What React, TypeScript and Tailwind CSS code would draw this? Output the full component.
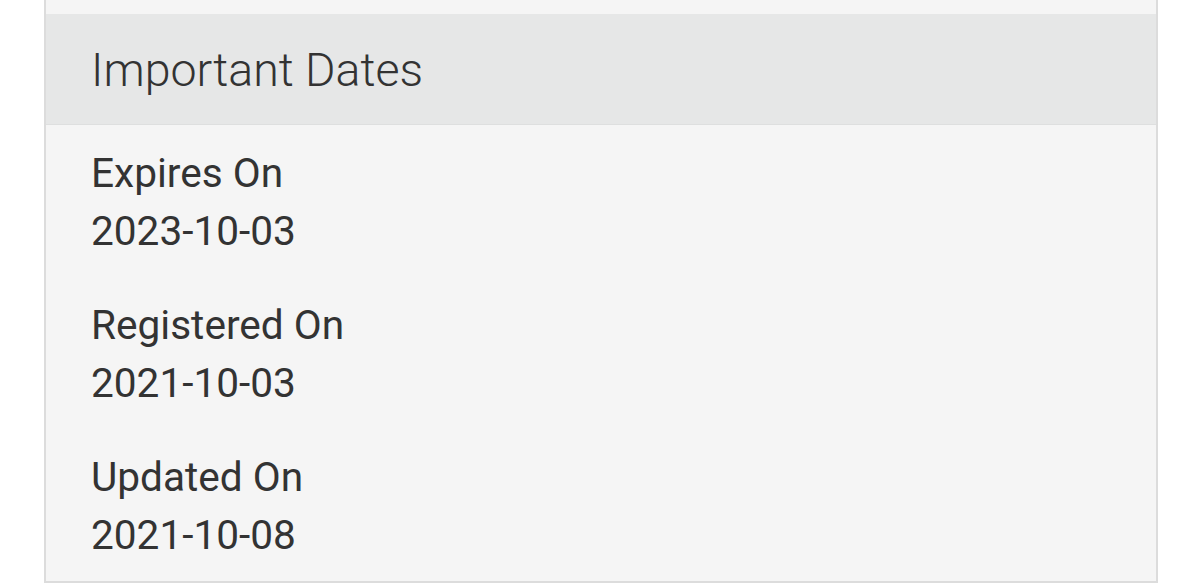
import React from 'react';

const dates = [
  { label: 'Expires On', value: '2023-10-03' },
  { label: 'Registered On', value: '2021-10-03' },
  { label: 'Updated On', value: '2021-10-08' },
];

export default function App() {
  return (
    <div className="w-[1200px] h-[583px] overflow-hidden bg-white font-['Roboto',sans-serif]">
      <div className="ml-[44px] w-[1114px] border-x-[2px] border-b-[2px] border-[#dcdcdc] bg-[#f5f5f5]">
        <div className="h-[14px]" />
        <div className="h-[111px] bg-[#e6e7e7] border-b border-[#dedfdf] pl-[45px] flex items-center">
          <h2 className="text-[46.5px] font-light text-[#333] leading-none pt-[2px]">Important Dates</h2>
        </div>
        <div className="pl-[45px] pt-[19px] pb-[17px] flex flex-col gap-[36px]">
          {dates.map(d => (
            <div key={d.label} className="text-[40.6px] leading-[58px] text-[#333]">
              <div>{d.label}</div>
              <div>{d.value}</div>
            </div>
          ))}
        </div>
      </div>
    </div>
  );
}
